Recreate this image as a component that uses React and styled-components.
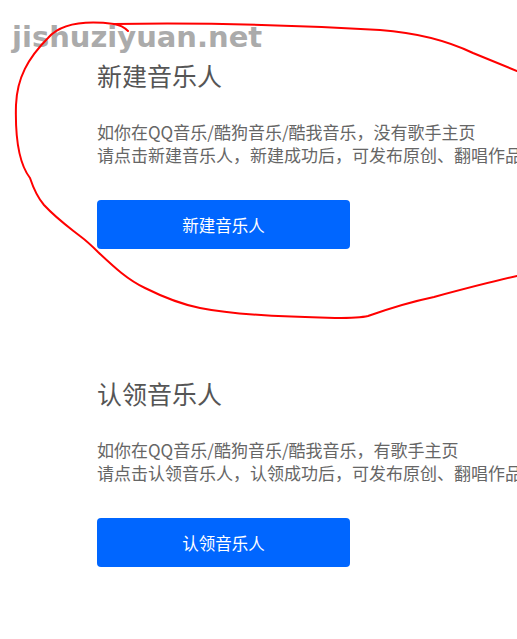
import React from 'react';
import styled, { createGlobalStyle } from 'styled-components';

const GlobalStyle = createGlobalStyle`
   html, body {
      margin: 0;
      padding: 0;
      background: #fff;
      overflow: hidden;
   }
`;

const Page = styled.div`
   position: relative;
   width: 517px;
   height: 639px;
   overflow: hidden;
   padding: 58px 0 0 97px;
   box-sizing: border-box;
   font-family: 'Noto Sans CJK SC', 'Liberation Sans', sans-serif;
`;

const Section = styled.section`
   display: flex;
   flex-direction: column;
   align-items: flex-start;
   margin-bottom: 127px;
`;

const Title = styled.h2`
   margin: 0 0 27px 0;
   font-size: 25px;
   line-height: 35px;
   font-weight: 400;
   color: #555;
`;

const Desc = styled.p`
   margin: 0 0 34px 0;
   font-size: 17px;
   line-height: 23px;
   color: #666;
   white-space: nowrap;
`;

const ActionBtn = styled.button`
   width: 253px;
   height: 49px;
   border: none;
   border-radius: 4px;
   background: #0066ff;
   color: #fff;
   font-family: inherit;
   font-size: 16.5px;
   cursor: pointer;
`;

const Watermark = styled.div`
   position: absolute;
   left: 12px;
   top: 23px;
   font-family: 'DejaVu Sans', sans-serif;
   font-weight: bold;
   font-size: 29px;
   line-height: 29px;
   color: #ababab;
   pointer-events: none;
`;

const Scribble = styled.svg`
   position: absolute;
   left: 0;
   top: 0;
   pointer-events: none;
`;

const sections = [
   {
      title: '新建音乐人',
      lines: ['如你在QQ音乐/酷狗音乐/酷我音乐，没有歌手主页', '请点击新建音乐人，新建成功后，可发布原创、翻唱作品'],
      action: '新建音乐人',
   },
   {
      title: '认领音乐人',
      lines: ['如你在QQ音乐/酷狗音乐/酷我音乐，有歌手主页', '请点击认领音乐人，认领成功后，可发布原创、翻唱作品'],
      action: '认领音乐人',
   },
];

const App = () => {
   return (
      <Page>
         <GlobalStyle />
         {sections.map((s) => (
            <Section key={s.title}>
               <Title>{s.title}</Title>
               <Desc>
                  {s.lines[0]}
                  <br />
                  {s.lines[1]}
               </Desc>
               <ActionBtn>{s.action}</ActionBtn>
            </Section>
         ))}
         <Watermark>jishuziyuan.net</Watermark>
         <Scribble width="517" height="340" viewBox="0 0 517 340">
            <path
               d="M128 31 C124 27 120 25 114 24 C90 21 62 22 48 38 C28 58 17 78 16 105 C15 140 20 165 30 178 C34 190 38 198 44 205 C58 220 70 228 80 236 C88 242 92 246 98 252 C115 268 128 280 145 288 C165 298 180 304 200 308 C230 314 280 317 335 318 C350 318 360 318 368 316 C385 310 410 302 434 297 C460 290 490 282 517 276"
               fill="none"
               stroke="#ff0000"
               strokeWidth="2"
               strokeLinecap="round"
            />
            <path
               d="M114 24 C180 23 280 24 380 30 C420 33 450 42 473 53 C490 60 505 66 517 71"
               fill="none"
               stroke="#ff0000"
               strokeWidth="2"
               strokeLinecap="round"
            />
         </Scribble>
      </Page>
   );
};

export default App;
